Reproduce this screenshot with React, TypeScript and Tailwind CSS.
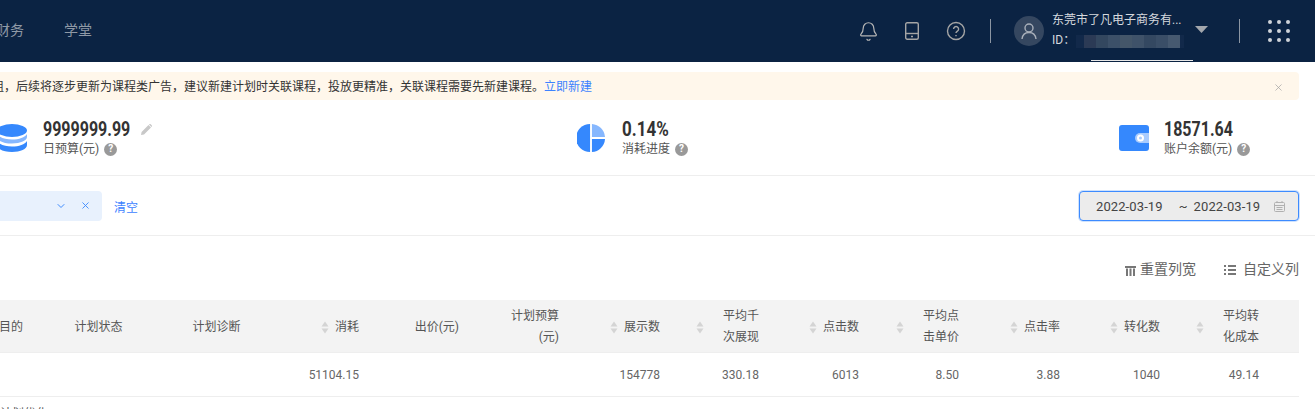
import { Bell, ChevronDown, X } from 'lucide-react'

const FONT = "font-['Roboto','Noto_Sans_CJK_SC',sans-serif]"

function Help() {
  return (
    <span className="inline-flex h-[13px] w-[13px] items-center justify-center rounded-full bg-[#999999] text-[10px] font-bold leading-none text-white">
      ?
    </span>
  )
}

function SortArrows() {
  return (
    <svg width="8" height="13" viewBox="0 0 8 13" className="shrink-0">
      <path d="M4 0.5 7.500 5.500H0.500z" fill="#d4d4d4" />
      <path d="M4 12.500 7.500 7.500H0.500z" fill="#d4d4d4" />
    </svg>
  )
}

function Header() {
  return (
    <div className="relative flex h-[62px] items-center bg-[#0b2343] text-[14px]">
      <div className="mb-[2px] ml-[-4px] flex gap-[40px] text-[#8f99a6]">
        <span>财务</span>
        <span>学堂</span>
      </div>
      <div className="ml-auto flex items-center">
        <Bell size={21} strokeWidth={1.4} className="text-[#b5b5b5]" />
        <svg width="14" height="18" viewBox="0 0 14 18" fill="none" stroke="#a5a5a5" strokeWidth="1.4" className="ml-[26.500px]">
          <rect x="0.700" y="0.700" width="12.600" height="16.600" rx="1.500" />
          <path d="M0.700 11.500H13.300" />
          <path d="M6 14.500H8" strokeWidth="1.600" />
        </svg>
        <svg width="20" height="20" viewBox="0 0 20 20" fill="none" stroke="#a5a5a5" strokeWidth="1.400" className="ml-[27px]">
          <circle cx="10" cy="10" r="8.500" />
          <path d="M7.600 8a2.500 2.500 0 1 1 3.800 2.100c-.9.600-1.400 1-1.400 2" />
          <path d="M10 14v1.200" />
        </svg>
        <div className="ml-[24px] h-[24px] w-px bg-[#8c96a3]" />
        <div className="ml-[23px] flex h-[30px] w-[30px] items-center justify-center rounded-full bg-[#354760]">
          <svg width="16" height="17" viewBox="0 0 16 17" fill="none" stroke="#a9b0ba" strokeWidth="1.400">
            <circle cx="8" cy="5" r="4" />
            <path d="M1 16c.5-4 3-6.500 7-6.500s6.500 2.500 7 6.500" />
          </svg>
        </div>
        <div className="mb-[2px] ml-[8px] w-[130px] text-[12px] leading-[20px] text-[#d5d9de]">
          <div className="whitespace-nowrap">东莞市了凡电子商务有...</div>
          <div className="flex items-center">
            <span>ID：</span>
            <div className="ml-[1px] mt-[2px] flex h-[13px] w-[116px] shrink-0">
              <div className="w-[8px] bg-[#12294a]" />
              <div className="w-[12px] bg-[#2b3a55]" />
              <div className="w-[12px] bg-[#33475f]" />
              <div className="w-[12px] bg-[#3c5068]" />
              <div className="w-[12px] bg-[#445669]" />
              <div className="w-[12px] bg-[#3f5269]" />
              <div className="w-[12px] bg-[#344861]" />
              <div className="w-[12px] bg-[#3a4e67]" />
              <div className="w-[12px] bg-[#465970]" />
              <div className="w-[4px] bg-[#12294a]" />
            </div>
          </div>
        </div>
        <svg width="13" height="7" viewBox="0 0 13 7" className="mb-[3px] ml-[13px]">
          <path d="M0 0H13L6.500 7z" fill="#a3a7ad" />
        </svg>
        <div className="ml-[31px] h-[24px] w-px bg-[#8c96a3]" />
        <div className="ml-[28px] mr-[25px] grid grid-cols-3 gap-[5px]">
          {Array.from({ length: 9 }).map((_, i) => (
            <span key={i} className="h-[4px] w-[4px] rounded-full bg-[#cfd3d8]" />
          ))}
        </div>
      </div>
      <div className="absolute bottom-[1px] left-[1091px] h-px w-[102px] bg-[#e8e8e8]" />
    </div>
  )
}

function Alert() {
  return (
    <div className="mr-[16px] mt-[10px] flex h-[28px] items-center rounded-r-[4px] bg-[#fff7eb] pt-[2px] text-[12px] text-[#333333]">
      <span className="ml-[-8px] whitespace-nowrap">
        组，后续将逐步更新为课程类广告，建议新建计划时关联课程，投放更精准，关联课程需要先新建课程。
        <span className="text-[#3d83ff]">立即新建</span>
      </span>
      <X size={11} strokeWidth={1.5} className="ml-auto mr-[15px] text-[#a0a0a0]" />
    </div>
  )
}

function Stat({
  icon,
  value,
  label,
  numClass,
  extra,
}: {
  icon: React.ReactNode
  value: string
  label: string
  numClass: string
  extra?: React.ReactNode
}) {
  return (
    <div className="flex items-center">
      {icon}
      <div className="ml-[16px]">
        <div className="flex items-center gap-[10px]">
          <span className={`${numClass} inline-block origin-left whitespace-nowrap text-[20px] font-bold leading-[24px] text-[#333333]`}>
            {value}
          </span>
          {extra}
        </div>
        <div className="flex items-center gap-[5px] text-[12px] leading-[16px] text-[#555555]">
          <span>{label}</span>
          <Help />
        </div>
      </div>
    </div>
  )
}

function Stats() {
  return (
    <div className="ml-[-3px] mt-[10px] grid h-[66px] grid-cols-[580px_542px_1fr] items-start border-b border-[#eeeeee] pt-[7px]">
      <Stat
        value="9999999.99"
        label="日预算(元)"
        numClass="w-[88px] scale-x-[0.8]"
        extra={
          <svg width="11" height="11" viewBox="0 0 11 11">
            <path d="M0 11 .6 8 7.500 1 10 3.500 3 10.400z M8.300.3a1 1 0 0 1 1.400 0l1 1a1 1 0 0 1 0 1.400L10.500 3 8 .6z" fill="#c8c8c8" />
          </svg>
        }
        icon={
          <svg width="30" height="28" viewBox="0 0 30 28" className="mt-[2px]">
            <ellipse cx="15" cy="6.500" rx="15" ry="6.500" fill="#3588fd" />
            <path d="M0 10c2 3.500 8 5.500 15 5.500S28 13.500 30 10v3c0 3.500-6.500 6.500-15 6.500S0 16.500 0 13z" fill="#86b7fe" />
            <path d="M0 17c2 3.500 8 5.500 15 5.500S28 20.500 30 17v4c0 3.800-6.500 7-15 7S0 24.800 0 21z" fill="#3588fd" />
          </svg>
        }
      />
      <Stat
        value="0.14%"
        label="消耗进度"
        numClass="w-[47px] scale-x-[0.85]"
        icon={
          <svg width="28" height="28" viewBox="0 0 30 30" className="mr-[1px] mt-[2px]">
            <path d="M14 0v30A15 15 0 0 1 14 0z" fill="#3588fd" />
            <path d="M16 0a15 15 0 0 1 14 14H16z" fill="#86b7fe" />
            <path d="M16 16h14a15 15 0 0 1-14 14z" fill="#3588fd" />
          </svg>
        }
      />
      <Stat
        value="18571.64"
        label="账户余额(元)"
        numClass="w-[69px] scale-x-[0.8]"
        icon={
          <svg width="30" height="26" viewBox="0 0 30 26" className="mr-[-1px] mt-[2px]">
            <rect width="30" height="26" rx="3" fill="#3588fd" />
            <path d="M30 8H21a5 5 0 0 0 0 10h9z" fill="#a8cbfe" />
            <circle cx="21.500" cy="13" r="3.500" fill="#ffffff" />
            <circle cx="21.500" cy="13" r="1.500" fill="#a8cbfe" />
          </svg>
        }
      />
    </div>
  )
}

function Filters() {
  return (
    <div className="flex h-[60px] items-center justify-between border-b border-[#eeeeee] pr-[16px] text-[12px]">
      <div className="flex items-center">
        <div className="flex h-[30px] w-[102px] items-center justify-end rounded-r-[4px] bg-[#e8f1fd] pr-[11px] text-[#3d8bff]">
          <ChevronDown size={12} strokeWidth={2} />
          <X size={11} strokeWidth={2} className="ml-[13px]" />
        </div>
        <span className="ml-[12px] mt-[4px] text-[#3d83ff]">清空</span>
      </div>
      <div className="flex h-[30px] w-[220px] items-center rounded-[4px] border border-[#3d8bff] bg-[#ececec] pl-[16px] pr-[13px] pt-[2px] text-[13px] tracking-[0.1px] text-[#444444] shadow-[0_0_0_1px_#cfe2fd]">
        <span>2022-03-19</span>
        <span className="ml-[16px]">~</span>
        <span className="ml-[6px]">2022-03-19</span>
        <svg width="11" height="11" viewBox="0 0 11 11" fill="none" stroke="#b0b0b0" className="ml-auto">
          <rect x="0.500" y="1.500" width="10" height="9" rx="1" />
          <path d="M0.500 4.500H10.500M3 0V2M8 0V2M2.500 6.500H8.500M2.500 8.500H8.500" />
        </svg>
      </div>
    </div>
  )
}

function Toolbar() {
  return (
    <div className="flex h-[64px] items-center justify-end pr-[16px] pt-[3px] text-[14px] text-[#666666]">
      <svg width="11" height="10" viewBox="0 0 11 10" fill="#777777" className="mt-[2px]">
        <path d="M0 0H11V2H0zM1 2.500H3V10H1zM4.500 2.500H6.500V10H4.500zM8 2.500H10V10H8z" />
      </svg>
      <span className="ml-[4px]">重置列宽</span>
      <svg width="12" height="10" viewBox="0 0 12 10" fill="#777777" className="ml-[28px]">
        <path d="M0 0H2V2H0zM4 0H12V2H4zM0 4H2V6H0zM4 4H12V6H4zM0 8H2V10H0zM4 8H12V10H4z" />
      </svg>
      <span className="ml-[7px]">自定义列</span>
    </div>
  )
}

const columns = [
  { title: ['消耗'], sort: true, value: '51104.15', cls: 'w-[100px] gap-[6px]' },
  { title: ['出价(元)'], sort: false, value: '', cls: 'w-[100px]' },
  { title: ['计划预算', '(元)'], sort: false, value: '', cls: 'w-[100px]' },
  { title: ['展示数'], sort: true, value: '154778', cls: 'w-[101px] gap-[6px]' },
  { title: ['平均千', '次展现'], sort: true, value: '330.18', cls: 'w-[99px] gap-[19px]' },
  { title: ['点击数'], sort: true, value: '6013', cls: 'w-[100px] gap-[6px]' },
  { title: ['平均点', '击单价'], sort: true, value: '8.50', cls: 'w-[100px] gap-[19px]' },
  { title: ['点击率'], sort: true, value: '3.88', cls: 'w-[101px] gap-[6px]' },
  { title: ['转化数'], sort: true, value: '1040', cls: 'w-[100px] gap-[6px]' },
  { title: ['平均转', '化成本'], sort: true, value: '49.14', cls: 'w-[99px] gap-[19px]' },
]

function Table() {
  return (
    <div className="mr-[16px] text-[12px] text-[#555555]">
      <div className="flex h-[53px] items-center border-b border-[#eeeeee] bg-[#f3f3f3] pt-[2px]">
        <span className="ml-[-1px] w-[75.500px] shrink-0">目的</span>
        <span className="w-[118px] shrink-0">计划状态</span>
        <span className="w-[106.500px] shrink-0">计划诊断</span>
        {columns.map((c) => (
          <div key={c.title[0]} className={`${c.cls} flex shrink-0 items-center justify-end pr-[40px]`}>
            {c.sort && <SortArrows />}
            <div className="text-right leading-[21px]">
              {c.title.map((t) => (
                <div key={t} className="whitespace-nowrap">{t}</div>
              ))}
            </div>
          </div>
        ))}
      </div>
      <div className="flex h-[44px] items-center border-b border-[#eeeeee] text-[#666666]">
        <span className="ml-[-1px] w-[300px] shrink-0" />
        {columns.map((c) => (
          <div key={c.title[0]} className={`${c.cls} shrink-0 pr-[40px] text-right`}>
            {c.value}
          </div>
        ))}
      </div>
      <div className="mt-[9px] leading-[16px] text-[#555555]">计划优化</div>
    </div>
  )
}

export default function App() {
  return (
    <div className={`${FONT} h-[409px] w-[1315px] overflow-hidden bg-white`}>
      <Header />
      <Alert />
      <Stats />
      <Filters />
      <Toolbar />
      <Table />
    </div>
  )
}
